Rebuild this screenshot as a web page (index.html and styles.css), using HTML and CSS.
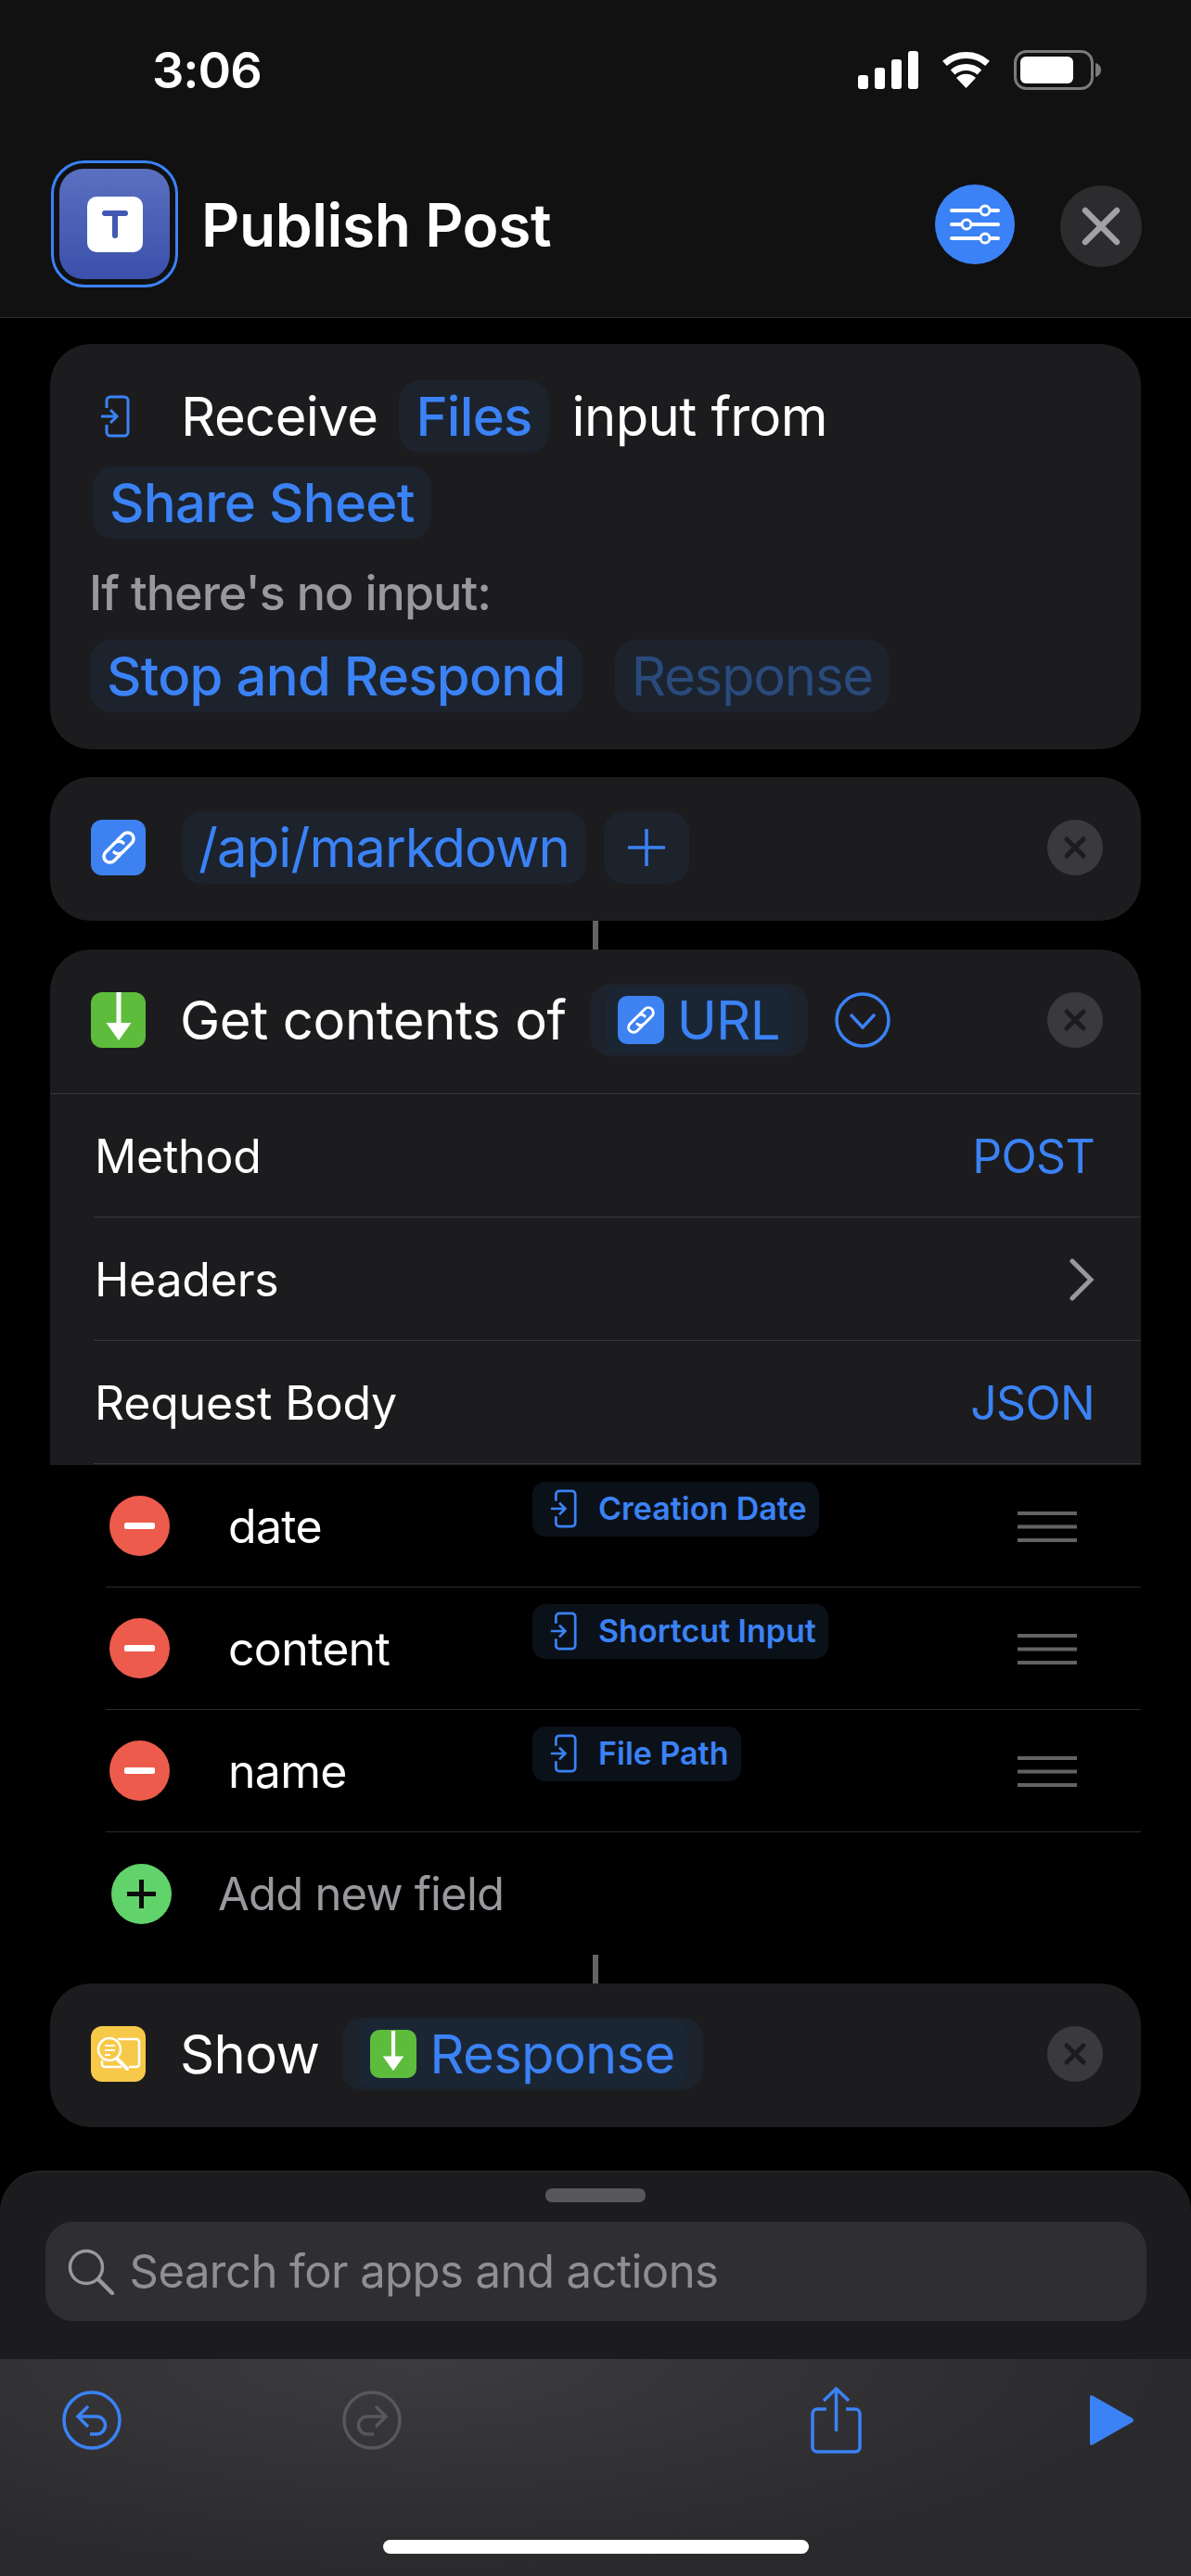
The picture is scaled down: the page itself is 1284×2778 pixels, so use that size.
FILE: index.html
```html
<!DOCTYPE html>
<html lang="en">
<head>
    <meta charset="UTF-8">
    <meta name="viewport" content="width=device-width, initial-scale=1.0">
    <title>Publish Post</title>
    <link rel="stylesheet" href="styles.css">
</head>
<body>
    <svg class="defs" width="0" height="0">
        <symbol id="input" viewBox="0 0 32 46">
            <path d="M7 14V6a4 4 0 0 1 4-4h15a4 4 0 0 1 4 4v34a4 4 0 0 1-4 4H11a4 4 0 0 1-4-4v-8" fill="none" stroke="currentColor" stroke-width="3"/>
            <path d="M1 23h16M11 16l7 7-7 7" fill="none" stroke="currentColor" stroke-width="3"/>
        </symbol>
        <symbol id="link" viewBox="0 0 60 60">
            <g transform="rotate(-45 30 30)" fill="none" stroke="#fff" stroke-width="3.500" stroke-linecap="round">
                <path d="M37 30a6.500 6.500 0 0 0-6.500-6.500H16.500a6.500 6.500 0 0 0 0 13H26"/>
                <path d="M23 30a6.500 6.500 0 0 0 6.500 6.500H43.500a6.500 6.500 0 0 0 0-13H34"/>
            </g>
        </symbol>
        <symbol id="download" viewBox="0 0 60 60">
            <path d="M27.500 0h5v33h11L30 52 16.500 33h11z" fill="#fff"/>
        </symbol>
        <symbol id="cross" viewBox="0 0 60 60">
            <circle cx="30" cy="30" r="30" fill="#3a3a3c"/>
            <path d="M21 21l18 18M39 21L21 39" stroke="#1c1c1e" stroke-width="5" stroke-linecap="round"/>
        </symbol>
        <symbol id="minus" viewBox="0 0 65 65">
            <circle cx="32.500" cy="32.500" r="32.500" fill="#ec5b4c"/>
            <rect x="16" y="29" width="33" height="7" rx="2" fill="#fff"/>
        </symbol>
        <symbol id="handle" viewBox="0 0 64 33">
            <path d="M0 2h64M0 16.500h64M0 31h64" stroke="#636366" stroke-width="4"/>
        </symbol>
    </svg>

    <header class="topbar">
        <div class="status">
            <span class="time">3:06</span>
            <div class="status-icons">
                <svg width="65" height="41" viewBox="0 0 65 41" fill="#fff">
                    <rect x="0" y="26" width="11" height="15" rx="3"/>
                    <rect x="18" y="18" width="11" height="23" rx="3"/>
                    <rect x="36" y="9" width="11" height="32" rx="3"/>
                    <rect x="54" y="0" width="11" height="41" rx="3"/>
                </svg>
                <svg width="57" height="41" viewBox="0 0 57 41">
                    <g fill="none" stroke="#fff" stroke-width="7">
                        <path d="M5.400 13.400a34.500 34.500 0 0 1 46.200 0"/>
                        <path d="M14.100 23a21.500 21.500 0 0 1 28.800 0"/>
                    </g>
                    <path d="M28.500 40L18 29a15 15 0 0 1 21 0z" fill="#fff"/>
                </svg>
                <svg width="94" height="43" viewBox="0 0 94 43">
                    <rect x="1.500" y="1.500" width="83" height="40" rx="12" fill="none" stroke="#7a7a7c" stroke-width="3"/>
                    <rect x="7" y="7" width="57" height="29" rx="6" fill="#fff"/>
                    <path d="M88 14c4 1 6 4 6 7.500s-2 6.500-6 7.500z" fill="#7a7a7c"/>
                </svg>
            </div>
        </div>
        <div class="titlebar">
            <div class="app-icon">
                <div class="app-icon-inner">
                    <div class="app-icon-t">
                        <svg width="28" height="30" viewBox="0 0 28 30">
                            <path d="M3 3h22M14 3v24" stroke="#4259b3" stroke-width="6" stroke-linecap="round"/>
                        </svg>
                    </div>
                </div>
            </div>
            <h1 class="title">Publish Post</h1>
            <button class="round-btn settings">
                <svg width="86" height="86" viewBox="0 0 86 86">
                    <g stroke="#fff" stroke-width="4" stroke-linecap="round">
                        <path d="M18 28h50M18 43h50M18 58h50"/>
                    </g>
                    <g fill="#3b82f6" stroke="#fff" stroke-width="3">
                        <circle cx="54" cy="28" r="5"/>
                        <circle cx="34" cy="43" r="5"/>
                        <circle cx="54" cy="58" r="5"/>
                    </g>
                </svg>
            </button>
            <button class="round-btn close">
                <svg width="88" height="88" viewBox="0 0 88 88">
                    <path d="M27 27l34 34M61 27L27 61" stroke="#a1a1a6" stroke-width="6.500" stroke-linecap="round"/>
                </svg>
            </button>
        </div>
    </header>

    <main class="canvas">
        <section class="card card-input">
            <div class="line">
                <svg class="input-icon" width="32" height="46"><use href="#input"/></svg>
                <span class="word">Receive</span>
                <span class="chip chip-files">Files</span>
                <span class="word">input from</span>
            </div>
            <div class="line line-share">
                <span class="chip">Share Sheet</span>
            </div>
            <p class="hint">If there's no input:</p>
            <div class="line line-stop">
                <span class="chip">Stop and Respond</span>
                <span class="chip chip-muted">Response</span>
            </div>
        </section>

        <section class="card card-row url-card">
            <div class="tile tile-blue"><svg width="60" height="60"><use href="#link"/></svg></div>
            <span class="chip chip-url">/api/markdown</span>
            <span class="chip chip-plus">
                <svg width="42" height="42" viewBox="0 0 42 42"><path d="M21 1v40M1 21h40" stroke="#3b82f6" stroke-width="3.500"/></svg>
            </span>
            <svg class="del" width="60" height="60"><use href="#cross"/></svg>
        </section>

        <div class="connector"></div>

        <section class="card card-request">
            <div class="request-head">
                <div class="tile tile-green"><svg width="60" height="60"><use href="#download"/></svg></div>
                <span class="word">Get contents of</span>
                <span class="chip chip-var">
                    <span class="chip-var-in">
                        <span class="tile-sm tile-blue"><svg width="50" height="50"><use href="#link"/></svg></span>
                        URL
                    </span>
                </span>
                <svg class="expand" width="60" height="60" viewBox="0 0 60 60">
                    <circle cx="30" cy="30" r="28" fill="none" stroke="#3b82f6" stroke-width="3.500"/>
                    <path d="M17 24l13 14 13-14" fill="none" stroke="#3b82f6" stroke-width="3.500"/>
                </svg>
                <svg class="del" width="60" height="60"><use href="#cross"/></svg>
            </div>
            <div class="option"><span>Method</span><span class="option-value">POST</span></div>
            <div class="option">
                <span>Headers</span>
                <svg class="chevron" width="27" height="46" viewBox="0 0 27 46"><path d="M3 3l20 20-20 20" fill="none" stroke="#98989d" stroke-width="5" stroke-linecap="round"/></svg>
            </div>
            <div class="option"><span>Request Body</span><span class="option-value">JSON</span></div>
        </section>

        <section class="fields">
            <div class="field">
                <svg width="65" height="65"><use href="#minus"/></svg>
                <span class="field-name">date</span>
                <span class="var-chip"><svg width="29" height="42"><use href="#input"/></svg>Creation Date</span>
                <svg class="handle" width="64" height="33"><use href="#handle"/></svg>
            </div>
            <div class="field">
                <svg width="65" height="65"><use href="#minus"/></svg>
                <span class="field-name">content</span>
                <span class="var-chip"><svg width="29" height="42"><use href="#input"/></svg>Shortcut Input</span>
                <svg class="handle" width="64" height="33"><use href="#handle"/></svg>
            </div>
            <div class="field">
                <svg width="65" height="65"><use href="#minus"/></svg>
                <span class="field-name">name</span>
                <span class="var-chip"><svg width="29" height="42"><use href="#input"/></svg>File Path</span>
                <svg class="handle" width="64" height="33"><use href="#handle"/></svg>
            </div>
            <div class="field-add">
                <svg width="65" height="65" viewBox="0 0 65 65">
                    <circle cx="32.500" cy="32.500" r="32.500" fill="#62d26a"/>
                    <path d="M32.500 17v31M17 32.500h31" stroke="#0b0b0b" stroke-width="5"/>
                </svg>
                <span>Add new field</span>
            </div>
        </section>

        <div class="connector"></div>

        <section class="card card-row">
            <div class="tile tile-yellow">
                <svg width="60" height="60" viewBox="0 0 60 60" fill="none" stroke="#fff" stroke-width="2.500">
                    <path d="M29 14h20a3 3 0 0 1 3 3v24a3 3 0 0 1-3 3h-8"/>
                    <path d="M12 37v4a3 3 0 0 0 3 3h18"/>
                    <circle cx="20" cy="25" r="12"/>
                    <path d="M28 35l11 11" stroke-width="4" stroke-linecap="round"/>
                    <path d="M15 21h11M15 26h11M15 31h6" stroke-width="2"/>
                </svg>
            </div>
            <span class="word">Show</span>
            <span class="chip chip-var chip-show">
                <span class="chip-var-in">
                    <span class="tile-sm tile-green"><svg width="50" height="50"><use href="#download"/></svg></span>
                    Response
                </span>
            </span>
            <svg class="del" width="60" height="60"><use href="#cross"/></svg>
        </section>
    </main>

    <section class="sheet">
        <div class="grabber"></div>
        <div class="search">
            <svg width="50" height="50" viewBox="0 0 50 50" fill="none" stroke="#98989d">
                <circle cx="20" cy="20" r="17.500" stroke-width="3.500"/>
                <path d="M33 33l15 15" stroke-width="4.500" stroke-linecap="round"/>
            </svg>
            <span>Search for apps and actions</span>
        </div>
    </section>

    <footer class="toolbar">
        <div class="tools">
            <svg class="tool-undo" width="64" height="66" viewBox="0 0 64 66" fill="none" stroke="#3b82f6" stroke-width="3.500">
                <circle cx="32" cy="33" r="30"/>
                <path d="M28 18L17 29l11 11M17 29h20a9 9 0 0 1 0 19h-7"/>
            </svg>
            <svg class="tool-redo" width="64" height="66" viewBox="0 0 64 66" fill="none" stroke="#58585c" stroke-width="3.500">
                <circle cx="32" cy="33" r="30"/>
                <path d="M36 18l11 11-11 11M47 29H27a9 9 0 0 0 0 19h7"/>
            </svg>
            <svg class="tool-share" width="55" height="72" viewBox="0 0 55 72" fill="none" stroke="#3b82f6" stroke-width="3.500">
                <path d="M27.500 48V2M14 15L27.500 2 41 15"/>
                <path d="M17 24H7a5 5 0 0 0-5 5v36a5 5 0 0 0 5 5h41a5 5 0 0 0 5-5V29a5 5 0 0 0-5-5H38"/>
            </svg>
            <svg class="tool-play" width="48" height="54" viewBox="0 0 48 54">
                <path d="M2 0l44 25a2.500 2.500 0 0 1 0 4L2 54a2 2 0 0 1-2-2V2a2 2 0 0 1 2-2z" fill="#3b82f6"/>
            </svg>
        </div>
        <div class="home-bar"></div>
    </footer>
</body>
</html>
```

FILE: styles.css
```css
* {
    box-sizing: border-box;
}
body {
    display: flex;
    flex-direction: column;
    width: 1284px;
    height: 2778px;
    margin: 0;
    overflow: hidden;
    background-color: #000;
    color: #fff;
    font-family: Inter, "Noto Sans", sans-serif;
}
svg {
    display: block;
    flex: none;
}
.defs {
    position: absolute;
}

/* header */
.topbar {
    height: 343px;
    background-color: #111112;
    border-bottom: 1px solid #2c2c2e;
}
.status {
    display: flex;
    align-items: center;
    justify-content: space-between;
    height: 173px;
    padding: 0 97px 23px 164px;
}
.time {
    font-size: 54px;
    font-weight: 600;
    letter-spacing: -1px;
}
.status-icons {
    display: flex;
    align-items: center;
    gap: 23px;
}
.titlebar {
    display: flex;
    align-items: center;
    height: 137px;
    padding-left: 55px;
}
.app-icon {
    width: 137px;
    height: 137px;
    padding: 6px;
    border: 3px solid #3b82f6;
    border-radius: 36px;
}
.app-icon-inner {
    display: flex;
    align-items: center;
    justify-content: center;
    height: 100%;
    border-radius: 26px;
    background: linear-gradient(#5a70bf, #3b50ab);
}
.app-icon-t {
    display: flex;
    align-items: center;
    justify-content: center;
    width: 60px;
    height: 60px;
    border-radius: 10px;
    background-color: #fff;
}
.title {
    margin: 2px 0 0 25px;
    font-size: 64px;
    font-weight: 600;
    letter-spacing: -0.4px;
}
.round-btn {
    padding: 0;
    border: 0;
    border-radius: 50%;
}
.settings {
    width: 86px;
    height: 86px;
    margin-left: auto;
    background-color: #3b82f6;
}
.close {
    width: 88px;
    height: 88px;
    margin: 5px 53px 0 49px;
    background-color: #2c2c2e;
}

/* workflow */
.canvas {
    flex: 1;
    padding: 28px 54px 0;
}
.card {
    width: 1176px;
    border-radius: 44px;
    background-color: #1c1c1e;
}
.card-input {
    height: 437px;
    margin-bottom: 30px;
    padding: 39px 0 0 44px;
}
.card-row {
    display: flex;
    align-items: center;
    height: 155px;
    padding: 0 41px 3px 44px;
}
.url-card {
    gap: 39px;
}
.line {
    display: flex;
    align-items: center;
    height: 78px;
}
.line-share {
    margin: 15px 0 0 2px;
}
.line-stop {
    gap: 35px;
    margin-left: -1px;
}
.input-icon {
    margin: 0 55px 0 10px;
    color: #3b82f6;
}
.word {
    font-size: 58px;
    letter-spacing: -0.6px;
    white-space: nowrap;
}
.hint {
    display: flex;
    align-items: center;
    height: 109px;
    margin: 0 0 0 -2px;
    padding-top: 8px;
    color: #98989d;
    font-size: 52px;
    font-weight: 500;
    letter-spacing: -0.95px;
}
.chip {
    display: inline-flex;
    align-items: center;
    height: 78px;
    padding: 0 18px;
    border-radius: 22px;
    background-color: #1c232d;
    color: #3b82f6;
    font-size: 58px;
    font-weight: 500;
    letter-spacing: -0.7px;
    white-space: nowrap;
}
.chip-files {
    margin: 0 25px 0 23px;
}
.chip-muted {
    color: #2a4a7c;
    font-weight: 400;
    letter-spacing: -1.2px;
}
.chip-url {
    font-weight: 400;
    letter-spacing: -0.9px;
}
.chip-plus {
    margin-left: -20px;
    padding: 0 25px;
}
.tile {
    display: flex;
    width: 59px;
    height: 60px;
    border-radius: 12px;
}
.tile-sm {
    display: flex;
    align-items: center;
    justify-content: center;
    width: 50px;
    height: 52px;
    margin-right: 14px;
    border-radius: 10px;
}
.tile-blue {
    background-color: #3d82f0;
}
.tile-green {
    background-color: #5ebc3c;
}
.tile-yellow {
    background-color: #f7c948;
}
.del {
    margin-left: auto;
}
.connector {
    width: 6px;
    height: 31px;
    margin-left: 585px;
    background-color: #636366;
}

/* request card */
.card-request {
    height: 556px;
    border-radius: 44px 44px 0 0;
}
.request-head {
    display: flex;
    align-items: center;
    height: 156px;
    padding: 0 41px 4px 44px;
    border-bottom: 1px solid #38383a;
}
.request-head .word {
    margin-left: 37px;
    letter-spacing: -0.4px;
}
.chip-var {
    padding: 0 18px;
    margin-left: 25px;
    font-weight: 400;
}
.chip-var-in {
    display: flex;
    align-items: center;
    height: 72px;
    padding: 0 12px;
    border-radius: 14px;
    background-color: #1b2635;
}
.expand {
    margin-left: 29px;
}
.option {
    display: flex;
    align-items: center;
    justify-content: space-between;
    height: 133px;
    padding: 0 50px 0 48px;
    font-size: 50px;
    letter-spacing: -0.2px;
    background: linear-gradient(#38383a, #38383a) 47px bottom / 100% 1px no-repeat;
}
.option-value {
    color: #3b82f6;
    letter-spacing: -0.7px;
}
.card-row .word {
    margin-left: 37px;
}
.chip-show {
    margin-left: 25px;
}

/* fields under the request */
.fields {
    width: 1176px;
    height: 528px;
}
.field {
    display: flex;
    align-items: center;
    height: 132px;
    margin-left: 60px;
    padding-left: 4px;
    border-bottom: 1px solid #2c2c2e;
}
.field-name {
    width: 328px;
    margin-left: 63px;
    font-size: 50px;
    letter-spacing: -0.7px;
}
.var-chip {
    display: flex;
    align-items: center;
    align-self: flex-start;
    gap: 23px;
    height: 59px;
    margin-top: 18px;
    padding: 0 13px 2px 19px;
    border-radius: 14px;
    background-color: #0b1119;
    color: #3b82f6;
    font-size: 34px;
    font-weight: 600;
}
.var-chip svg {
    width: 29px;
    height: 42px;
}
.handle {
    margin: 2px 69px 0 auto;
}
.field-add {
    display: flex;
    align-items: center;
    gap: 50px;
    height: 133px;
    padding-left: 66px;
    color: #98989d;
    font-size: 49px;
    letter-spacing: -0.8px;
}

/* search sheet */
.sheet {
    display: flex;
    flex-direction: column;
    align-items: center;
    height: 203px;
    padding-top: 18px;
    border-top: 1px solid #2c2c2e;
    border-radius: 44px 44px 0 0;
    background-color: #1c1c1e;
}
.grabber {
    width: 108px;
    height: 15px;
    border-radius: 7px;
    background-color: #58585c;
}
.search {
    display: flex;
    align-items: center;
    gap: 17px;
    width: 1187px;
    height: 107px;
    margin-top: 21px;
    padding-left: 24px;
    border-radius: 30px;
    background-color: #2f2f33;
    color: #8e8e93;
    font-size: 49px;
    letter-spacing: -0.55px;
}

/* toolbar */
.toolbar {
    display: flex;
    flex-direction: column;
    height: 234px;
    background: radial-gradient(ellipse at 35% 0, #3c3c3f, #2a2a2d 70%);
}
.tools {
    display: flex;
    align-items: center;
    height: 76px;
    margin-top: 28px;
    padding-left: 67px;
}
.tool-redo {
    margin-left: 238px;
}
.tool-share {
    margin-left: 441px;
}
.tool-play {
    margin-left: 246px;
}
.home-bar {
    width: 459px;
    height: 15px;
    margin: auto auto 24px;
    border-radius: 8px;
    background-color: #fff;
}
```
